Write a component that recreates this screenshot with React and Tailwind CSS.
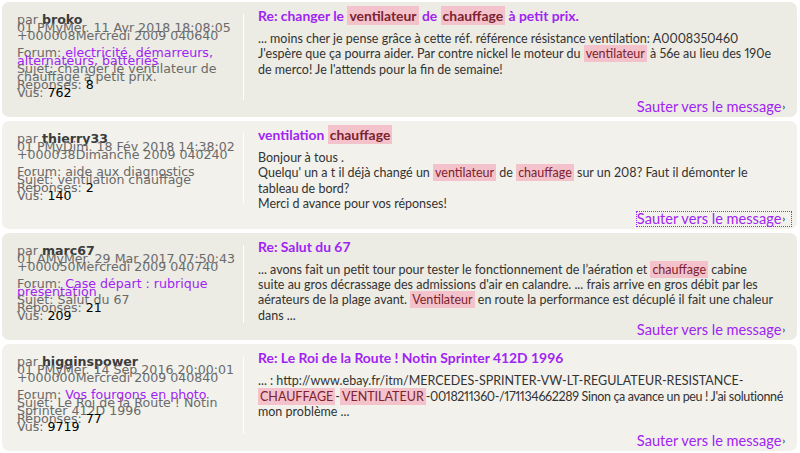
import React from 'react';

const results = [
  {
    tone: 'dark',
    author: 'broko',
    date: ['01 PMyMer. 11 Avr 2018 18:08:05', '+000008Mercredi 2009 040640'],
    forum: [['Forum: ', { link: 'electricité, démarreurs,' }], [{ link: 'alternateurs, batteries' }]],
    subject: ['Sujet: changer le ventilateur de', 'chauffage à petit prix.'],
    replies: '8',
    views: '762',
    title: ['Re: changer le ', { hl: 'ventilateur' }, ' de ', { hl: 'chauffage' }, ' à petit prix.'],
    body: [
      ['... moins cher je pense grâce à cette réf. référence résistance ventilation: A0008350460'],
      ["J'espère que ça pourra aider. Par contre nickel le moteur du ", { hl: 'ventilateur' }, ' à 56e au lieu des 190e'],
      ["de merco! Je l'attends pour la fin de semaine!"],
    ],
  },
  {
    tone: 'light',
    focused: true,
    author: 'thierry33',
    date: ['01 PMyDim. 18 Fév 2018 14:38:02', '+000038Dimanche 2009 040240'],
    forum: [['Forum: aide aux diagnostics']],
    subject: ['Sujet: ventilation chauffage'],
    replies: '2',
    views: '140',
    title: ['ventilation ', { hl: 'chauffage' }],
    body: [
      ['Bonjour à tous .'],
      ["Quelqu' un a t il déjà changé un ", { hl: 'ventilateur' }, ' de ', { hl: 'chauffage' }, ' sur un 208? Faut il démonter le'],
      ['tableau de bord?'],
      ['Merci d avance pour vos réponses!'],
    ],
  },
  {
    tone: 'dark',
    author: 'marc67',
    date: ['01 AMyMer. 29 Mar 2017 07:50:43', '+000050Mercredi 2009 040740'],
    forum: [['Forum: ', { link: 'Case départ : rubrique' }], [{ link: 'présentation' }]],
    subject: ['Sujet: Salut du 67'],
    replies: '21',
    views: '209',
    title: ['Re: Salut du 67'],
    body: [
      ['... avons fait un petit tour pour tester le fonctionnement de l’aération et ', { hl: 'chauffage' }, ' cabine'],
      ["suite au gros décrassage des admissions d'air en calandre. ... frais arrive en gros débit par les"],
      ['aérateurs de la plage avant. ', { hl: 'Ventilateur' }, ' en route la performance est décuplé il fait une chaleur'],
      ['dans ...'],
    ],
  },
  {
    tone: 'light',
    author: 'higginspower',
    date: ['01 PMyMer. 14 Sep 2016 20:00:01', '+000000Mercredi 2009 040840'],
    forum: [['Forum: ', { link: 'Vos fourgons en photo' }]],
    subject: ['Sujet: Le Roi de la Route ! Notin', 'Sprinter 412D 1996'],
    replies: '77',
    views: '9719',
    title: ['Re: Le Roi de la Route ! Notin Sprinter 412D 1996'],
    body: [
      ['... : http://www.ebay.fr/itm/MERCEDES-SPRINTER-VW-LT-REGULATEUR-RESISTANCE-'],
      [{ hl: 'CHAUFFAGE' }, '-', { hl: 'VENTILATEUR' }, { tight: "-0018211360-/171134662289 Sinon ça avance un peu ! J'ai solutionné" }],
      ['mon problème ...'],
    ],
  },
];

const Segments = ({ parts }) =>
  parts.map((p, i) => {
    if (typeof p === 'string') return <React.Fragment key={i}>{p}</React.Fragment>;
    if (p.hl)
      return (
        <span key={i} className="bg-[#f4c2ca] text-[#7c2230] px-[2px] py-[1px]">
          {p.hl}
        </span>
      );
    if (p.tight)
      return (
        <span key={i} className="tracking-[-0.35px]">
          {p.tight}
        </span>
      );
    return (
      <a key={i} href="#" className="text-[#a024f2]">
        {p.link}
      </a>
    );
  });

const ResultCard = ({ r }) => (
  <div
    className={`rounded-[7px] pl-[15px] pr-[6px] pt-[6px] pb-[3px] ${
      r.tone === 'dark' ? 'bg-[#ecebe4]' : 'bg-[#f2f1ec]'
    }`}
  >
    <div className="flex items-start">
      <div
        className="w-[227px] shrink-0 mt-[6px] pt-[2px] pb-[3px] border-r border-white text-[12.6px] leading-[8px] text-[#6a6a6a] whitespace-nowrap"
        style={{ fontFamily: '"DejaVu Sans", Verdana, sans-serif' }}
      >
        <div>
          par <b className="text-[#3c3c3c]">{r.author}</b>
        </div>
        {r.date.map((d) => (
          <div key={d}>{d}</div>
        ))}
        <div className="mt-[9px]">
          {r.forum.map((line, i) => (
            <div key={i}>
              <Segments parts={line} />
            </div>
          ))}
          {r.subject.map((s) => (
            <div key={s}>{s}</div>
          ))}
          <div>
            Réponses: <span className="text-black">{r.replies}</span>
          </div>
          <div>
            Vus: <span className="text-black">{r.views}</span>
          </div>
        </div>
      </div>
      <div
        className="flex-1 min-w-0 pl-[14px] whitespace-nowrap"
        style={{ fontFamily: 'Lato, "Liberation Sans", sans-serif' }}
      >
        <h3 className="text-[13.9px] leading-[16px] font-bold text-[#a024f2]">
          <Segments parts={r.title} />
        </h3>
        <div className="mt-[7px] text-[12.5px] leading-[15.4px] text-[#333333] proportional-nums">
          {r.body.map((line, i) => (
            <div key={i}>
              <Segments parts={line} />
            </div>
          ))}
        </div>
      </div>
    </div>
    <div className="flex justify-end" style={{ fontFamily: 'Lato, "Liberation Sans", sans-serif' }}>
      <a
        href="#"
        className={`flex items-center text-[14.6px] leading-[14px] text-[#a024f2] pr-[6px] ${
          r.focused ? 'outline outline-1 outline-dotted outline-[#a024f2]' : ''
        }`}
      >
        Sauter vers le message
        <span className="text-[#333] text-[9px] font-bold ml-[1px]">›</span>
      </a>
    </div>
  </div>
);

export default function App() {
  return (
    <div className="w-[800px] h-[453px] bg-white pt-[2px] pl-[2px] pr-[3px] flex flex-col gap-[4px] overflow-hidden">
      {results.map((r, i) => (
        <ResultCard key={i} r={r} />
      ))}
    </div>
  );
}
